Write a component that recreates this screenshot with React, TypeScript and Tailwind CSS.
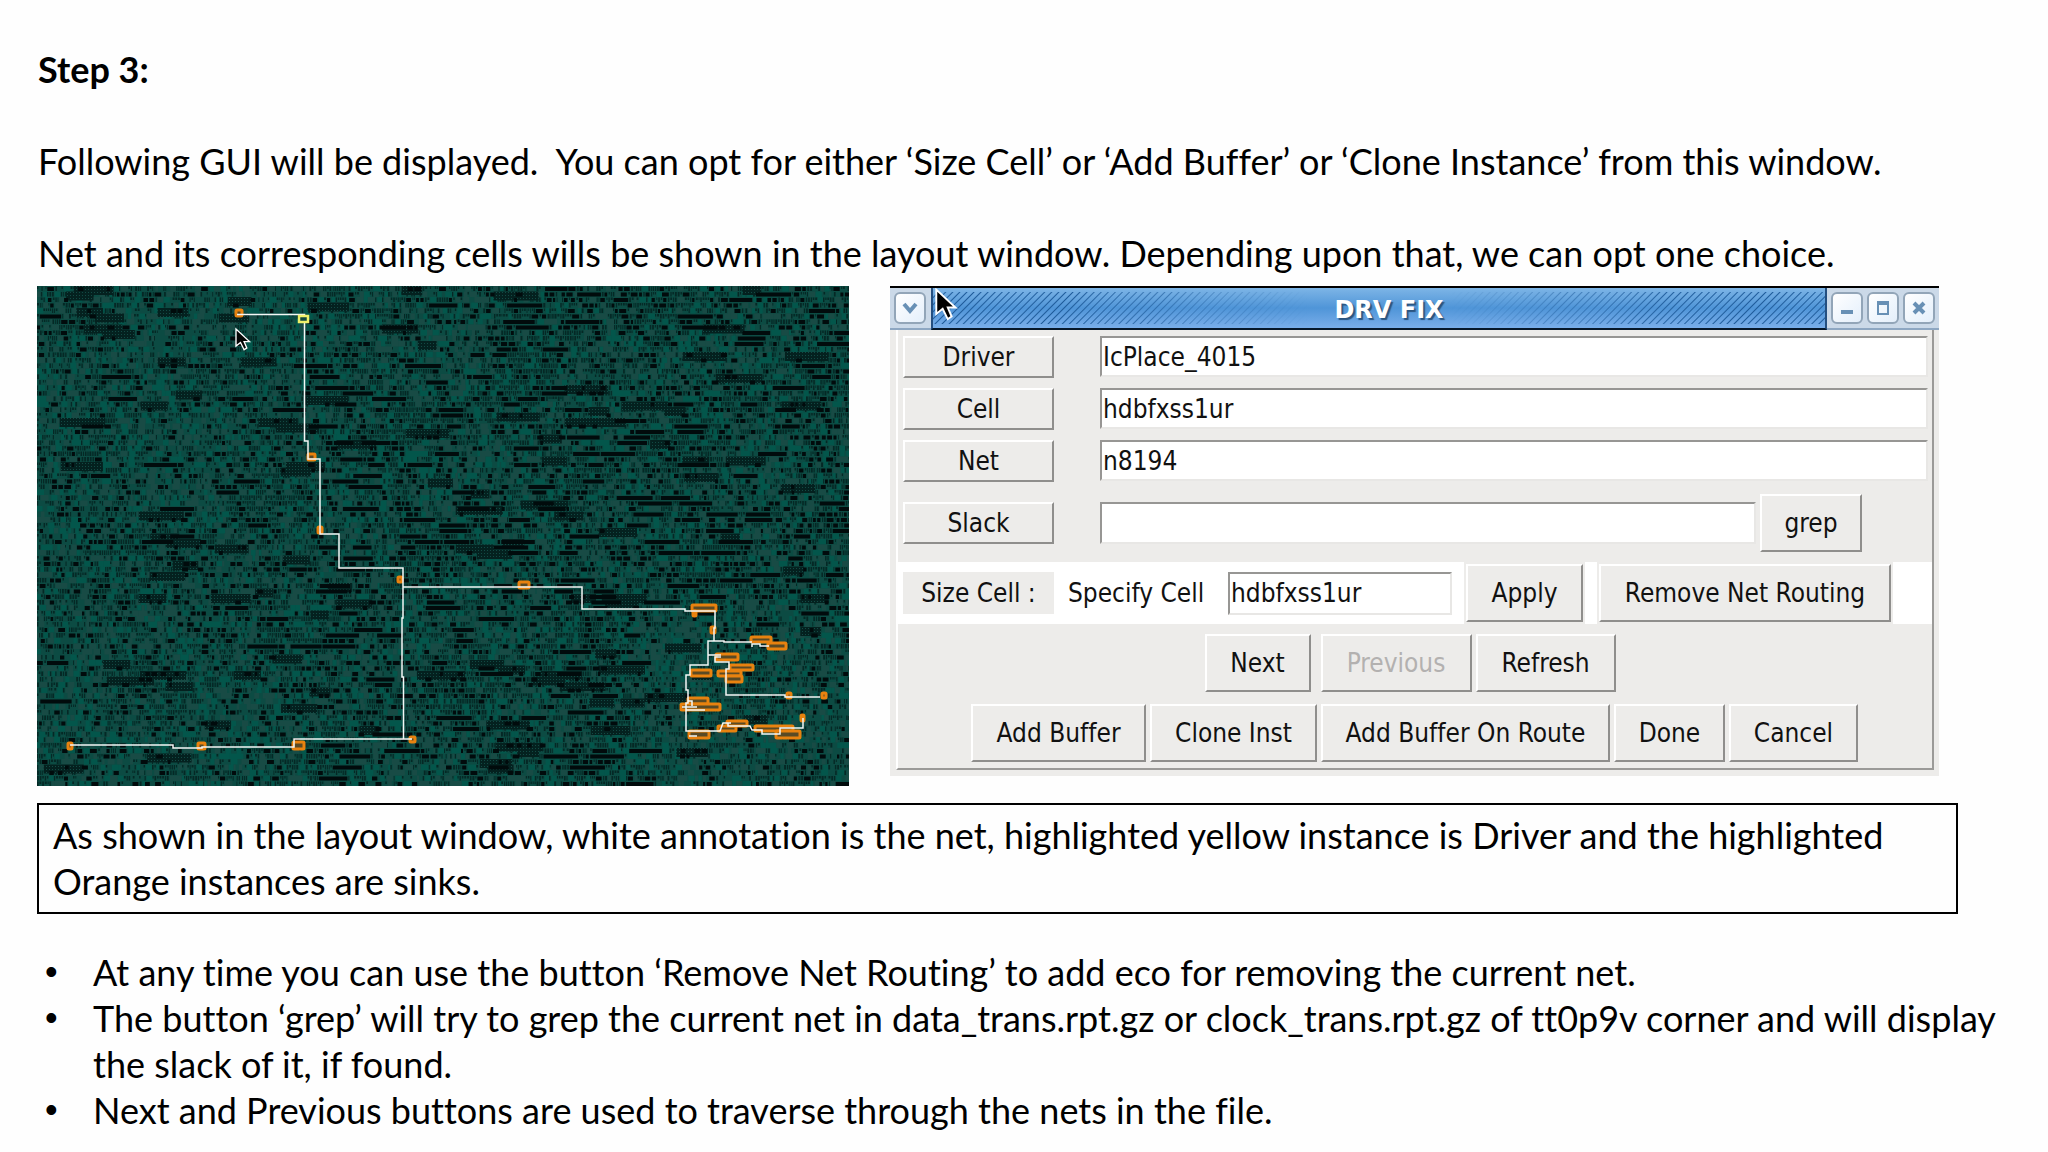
import type { ButtonHTMLAttributes, InputHTMLAttributes, ReactNode } from "react";
import clsx from "clsx";

const MAP_WIDTH = 812;
const MAP_HEIGHT = 500;
const ROW_PITCH = 5.5;

type Box = [x: number, y: number, width: number, height: number];

/** Small seeded generator, so the cell rows are the same on every render. */
function createRandom(seed: number) {
  let state = seed;
  return () => {
    state = (state * 1664525 + 1013904223) % 4294967296;
    return state / 4294967296;
  };
}

const rect = (x: number, y: number, w: number, h: number) =>
  `M${x.toFixed(1)} ${y.toFixed(1)}h${w.toFixed(1)}v${h}h-${w.toFixed(1)}z`;

function buildCells() {
  const random = createRandom(8194);
  const paths = { teal: "", slate: "", dark: "", black: "", block: "" };

  for (let y = 0; y < MAP_HEIGHT; y += ROW_PITCH) {
    let x = 0;
    while (x < MAP_WIDTH) {
      const busy = (x > 270 && x < 620 && y > 50) || (x > 420 && y < 330);
      // Slow waves leave patches with few gaps between the cells.
      const density =
        0.62 + 0.2 * Math.sin(x / 31 + y / 57) * Math.cos(y / 37 - x / 90) + (busy ? 0.08 : 0);
      const pick = random();
      if (pick < (busy ? 0.016 : 0.003)) {
        const w = 14 + random() * 22;
        paths.black += rect(x, y + 1, w, 4);
        x += w + 1;
      } else if (pick < (busy ? 0.13 : 0.09)) {
        const w = 2 + random() * 5;
        paths.black += rect(x, y + 1, w, 4);
        x += w + 1.5;
      } else if (pick < density) {
        const w = 0.8 + random() * 1.2;
        paths.dark += rect(x, y + 0.5, w, random() > 0.4 ? 4.5 : 2.5);
        x += w + 0.9;
      } else if (pick < density + 0.12) {
        const w = 2 + random() * 5;
        paths.teal += rect(x, y, w, 5.5);
        x += w;
      } else if (pick < density + 0.24) {
        const w = 2 + random() * 6;
        paths.slate += rect(x, y, w, 5.5);
        x += w;
      } else {
        x += 1 + random() * 3;
      }
    }
  }

  for (let i = 0; i < 110; i += 1) {
    const x = random() * 780;
    const y = Math.floor(random() * 88) * ROW_PITCH;
    paths.block += rect(x, y, 18 + random() * 30, 9);
  }
  return paths;
}

const CELLS = buildCells();

const NET_ROUTES = [
  "M200 28.5H267.5V155H271V173H283V248H302V282H366V301V332H365V391H366.500V453",
  "M375 453H257V461H165V462H136V459H33",
  "M366 301H545V323H648V325H678V342H677V355",
  "M715 356H687V355H671V379H653V389H649V404H651V417H649V445H683L686 437H691V440H713L715 444H725V448H738H743V442H766V432",
  "M715 361V358H723V360H732",
  "M671 369H684M684 371H678V376H692V383H689V409H748V411H783",
  "M645 421H660M651 415H655V420M649 424H668M688 437H694M652 450H660",
];

const SINKS: Box[] = [
  [199, 24, 6, 6],
  [271, 168, 7, 6],
  [281, 241, 4, 6],
  [361, 291, 4, 5],
  [482, 296, 10, 6],
  [655, 319, 24, 6],
  [656, 325, 3, 5],
  [674, 341, 4, 6],
  [714, 351, 20, 5],
  [731, 357, 18, 6],
  [679, 368, 22, 6],
  [693, 379, 23, 5],
  [681, 385, 23, 5],
  [689, 390, 16, 6],
  [654, 384, 20, 6],
  [651, 412, 20, 6],
  [644, 418, 39, 6],
  [652, 445, 20, 7],
  [681, 440, 18, 5],
  [690, 435, 20, 5],
  [718, 440, 38, 5],
  [739, 445, 24, 7],
  [750, 407, 4, 5],
  [785, 407, 4, 5],
  [764, 429, 3, 6],
  [31, 457, 4, 6],
  [161, 457, 7, 6],
  [256, 456, 11, 7],
  [373, 451, 5, 5],
];

const ARROW = "M0 0V19L5 15L9 23L12 21L9 14H15Z";

/** Placement view: rows of cells with the selected net drawn over them. */
function LayoutView() {
  return (
    <svg
      viewBox={`0 0 ${MAP_WIDTH} ${MAP_HEIGHT}`}
      preserveAspectRatio="none"
      role="img"
      aria-label="Layout window"
      className="block h-[500px] w-full bg-[#0c4b43]"
    >
      <defs>
        <pattern id="hatch" width="3" height="3" patternUnits="userSpaceOnUse">
          <rect width="3" height="3" fill="#04211f" />
          <rect width="1" height="1" fill="#124a44" />
        </pattern>
      </defs>
      <path d={CELLS.teal} fill="#03564b" />
      <path d={CELLS.slate} fill="#184b45" />
      <path d={CELLS.dark} fill="#052825" />
      <path d={CELLS.block} fill="url(#hatch)" />
      <path d={CELLS.black} fill="#010b0c" />
      {SINKS.map(([x, y, w, h]) => (
        <rect
          key={`${x}-${y}`}
          x={x}
          y={y}
          width={w}
          height={h}
          rx="1"
          fill="#5a4a25"
          stroke="#e8820f"
          strokeWidth="3"
        />
      ))}
      <path d={NET_ROUTES.join("")} fill="none" stroke="#f4f8f6" strokeWidth="1.5" />
      <rect x="262" y="30" width="9" height="6" fill="#12483f" stroke="#eef06a" strokeWidth="2.5" />
      <path
        d={ARROW}
        transform="translate(199 43) scale(0.9)"
        fill="#050505"
        stroke="#fff"
        strokeWidth="1.5"
      />
    </svg>
  );
}

function TkButton({ className, ...props }: ButtonHTMLAttributes<HTMLButtonElement>) {
  return (
    <button
      type="button"
      className={clsx(
        "shrink-0 whitespace-nowrap border-2 border-t-white border-l-white border-r-[#8f8e8c] border-b-[#8f8e8c] bg-[#edecea] text-center disabled:text-[#b3b1b0]",
        className,
      )}
      {...props}
    />
  );
}

function TkEntry({ className, ...props }: InputHTMLAttributes<HTMLInputElement>) {
  return (
    <input
      type="text"
      className={clsx(
        "min-w-0 flex-1 border-2 border-t-[#979694] border-l-[#979694] border-r-[#e8e7e5] border-b-[#e8e7e5] bg-white pl-px outline-none",
        className,
      )}
      {...props}
    />
  );
}

function TitleButton({ label, children }: { label: string; children: ReactNode }) {
  return (
    <button
      type="button"
      aria-label={label}
      className="flex h-8 w-8 items-center justify-center rounded-md border-2 border-[#92a5b8] bg-gradient-to-br from-white to-[#e4effb]"
    >
      <svg viewBox="0 0 16 16" className="h-4 w-4" fill="none" stroke="#6890b5" strokeWidth="4">
        {children}
      </svg>
    </button>
  );
}

function TitleBar() {
  return (
    <div className="relative flex h-11 border-t-2 border-black bg-[#cbd9e8]">
      <div className="flex w-[41px] items-center border-b-2 border-[#8ea7c2] pl-1">
        <TitleButton label="Window menu">
          <path d="M2 4L8 11L14 4" />
        </TitleButton>
      </div>
      <div className="relative flex flex-1 items-center justify-center border-x-2 border-b-2 border-x-[#244f80] border-b-[#06182b] bg-gradient-to-b from-[#7db5e6] via-[#4f95d8] to-[#79aeea]">
        <div className="absolute inset-x-0 inset-y-1 bg-[repeating-linear-gradient(135deg,transparent_0px,transparent_3px,#205d9c_4px,transparent_5px)] [mask-image:linear-gradient(90deg,#000_15%,transparent_42%,transparent_58%,#000_85%)]" />
        <h2 className="relative pt-1 pl-5 font-['DejaVu_Sans',sans-serif] text-2xl leading-7 font-bold text-white [text-shadow:2px_2px_1px_#2b5580]">
          DRV FIX
        </h2>
      </div>
      <div className="flex items-center gap-1 border-b-2 border-[#8ea7c2] px-1">
        <TitleButton label="Minimize">
          <path d="M2 12H14" />
        </TitleButton>
        <TitleButton label="Maximize">
          <path d="M2 3H14" />
          <path d="M3 3V14H13V3" strokeWidth="2" />
        </TitleButton>
        <TitleButton label="Close">
          <path d="M3 3L13 13M13 3L3 13" />
        </TitleButton>
      </div>
      <svg
        viewBox="-1 -1 18 26"
        className="absolute top-0 left-[45px] h-[34px] w-[23px]"
        aria-hidden
      >
        <path d={ARROW} fill="#000" stroke="#fff" strokeWidth="1.5" />
      </svg>
    </div>
  );
}

const FIELDS = [
  { label: "Driver", value: "IcPlace_4015" },
  { label: "Cell", value: "hdbfxss1ur" },
  { label: "Net", value: "n8194" },
];

function DrvFixDialog() {
  return (
    <section
      aria-label="DRV FIX"
      className="bg-[#edecea] pb-1.5 font-['DejaVu_Sans_Condensed','DejaVu_Sans',sans-serif] text-[26px] leading-8 text-[#111]"
    >
      <TitleBar />
      <div className="ml-1.5 mr-[5px] border-r-2 border-b-2 border-l-2 border-r-[#9b9a98] border-b-[#9b9a98] border-l-white pt-1.5 pb-1.5">
        <div className="flex flex-col gap-2.5 pr-1 pl-[5px]">
          {FIELDS.map(({ label, value }) => (
            <div key={label} className="flex h-[42px]">
              <TkButton className="w-[151px]">{label}</TkButton>
              <TkEntry className="ml-[46px] h-[41px]" aria-label={label} defaultValue={value} />
            </div>
          ))}
        </div>

        <div className="mt-3 flex items-center pr-[70px] pl-[5px]">
          <TkButton className="h-[42px] w-[151px]">Slack</TkButton>
          <TkEntry className="ml-[46px] h-[42px]" aria-label="Slack" />
          <TkButton className="ml-1 h-[58px] w-[102px]">grep</TkButton>
        </div>

        <div className="mt-2.5 flex h-[62px] items-center bg-white pr-[39px] pl-[5px]">
          <span className="flex h-[42px] w-[151px] items-center justify-center bg-[#edecea]">
            Size Cell :
          </span>
          <label htmlFor="specify-cell" className="w-[174px] pl-3.5 whitespace-nowrap">
            Specify Cell
          </label>
          <TkEntry id="specify-cell" className="h-[43px]" defaultValue="hdbfxss1ur" />
          <div className="ml-3 flex h-full items-center bg-[#edecea] px-0.5">
            <TkButton className="h-[58px] w-[117px]">Apply</TkButton>
          </div>
          <div className="ml-3 flex h-full items-center bg-[#edecea] px-0.5">
            <TkButton className="h-[58px] w-[292px]">Remove Net Routing</TkButton>
          </div>
        </div>

        <div className="mt-2.5 flex h-[58px] justify-center gap-1 pr-2.5">
          <TkButton className="mr-1.5 w-[106px]">Next</TkButton>
          <TkButton className="w-[151px]" disabled>
            Previous
          </TkButton>
          <TkButton className="w-[140px]">Refresh</TkButton>
        </div>

        <div className="mt-3 flex h-[58px] justify-center gap-1 pr-px">
          <TkButton className="w-[175px]">Add Buffer</TkButton>
          <TkButton className="w-[167px]">Clone Inst</TkButton>
          <TkButton className="w-[289px]">Add Buffer On Route</TkButton>
          <TkButton className="w-[111px]">Done</TkButton>
          <TkButton className="w-[129px]">Cancel</TkButton>
        </div>
      </div>
    </section>
  );
}

const NOTES = [
  "At any time you can use the button ‘Remove Net Routing’ to add eco for removing the current net.",
  "The button ‘grep’ will try to grep the current net in data_trans.rpt.gz or clock_trans.rpt.gz of tt0p9v corner and will display the slack of it, if found.",
  "Next and Previous buttons are used to traverse through the nets in the file.",
];

export default function App() {
  return (
    <main className="min-h-screen bg-[#fefefe] pt-[46px] pl-[37px] font-['Lato',sans-serif] text-[36px] leading-[46px] text-black [font-variant-ligatures:none]">
      <h1 className="pl-px font-bold">Step 3:</h1>
      <p className="mt-[46px] pl-px whitespace-pre-wrap">
        {"Following GUI will be displayed.  You can opt for either ‘Size Cell’ or ‘Add Buffer’ or ‘Clone Instance’ from this window."}
      </p>
      <p className="mt-[46px] pl-px">
        Net and its corresponding cells wills be shown in the layout window. Depending upon that, we
        can opt one choice.
      </p>

      <div className="mt-2.5 grid grid-cols-[minmax(0,812fr)_minmax(0,1049fr)] items-start gap-[41px] pr-[109px]">
        <LayoutView />
        <DrvFixDialog />
      </div>

      <p className="mt-[17px] mr-[90px] border-2 border-black px-3.5 pt-[7px] pb-2">
        As shown in the layout window, white annotation is the net, highlighted yellow instance is
        Driver and the highlighted Orange instances are sinks.
      </p>

      <ul className="mt-[35px] mr-8 list-none">
        {NOTES.map((note) => (
          <li key={note} className="flex">
            <span aria-hidden className="w-14 shrink-0 pl-2 font-['Liberation_Sans',sans-serif]">
              •
            </span>
            <span>{note}</span>
          </li>
        ))}
      </ul>
    </main>
  );
}
